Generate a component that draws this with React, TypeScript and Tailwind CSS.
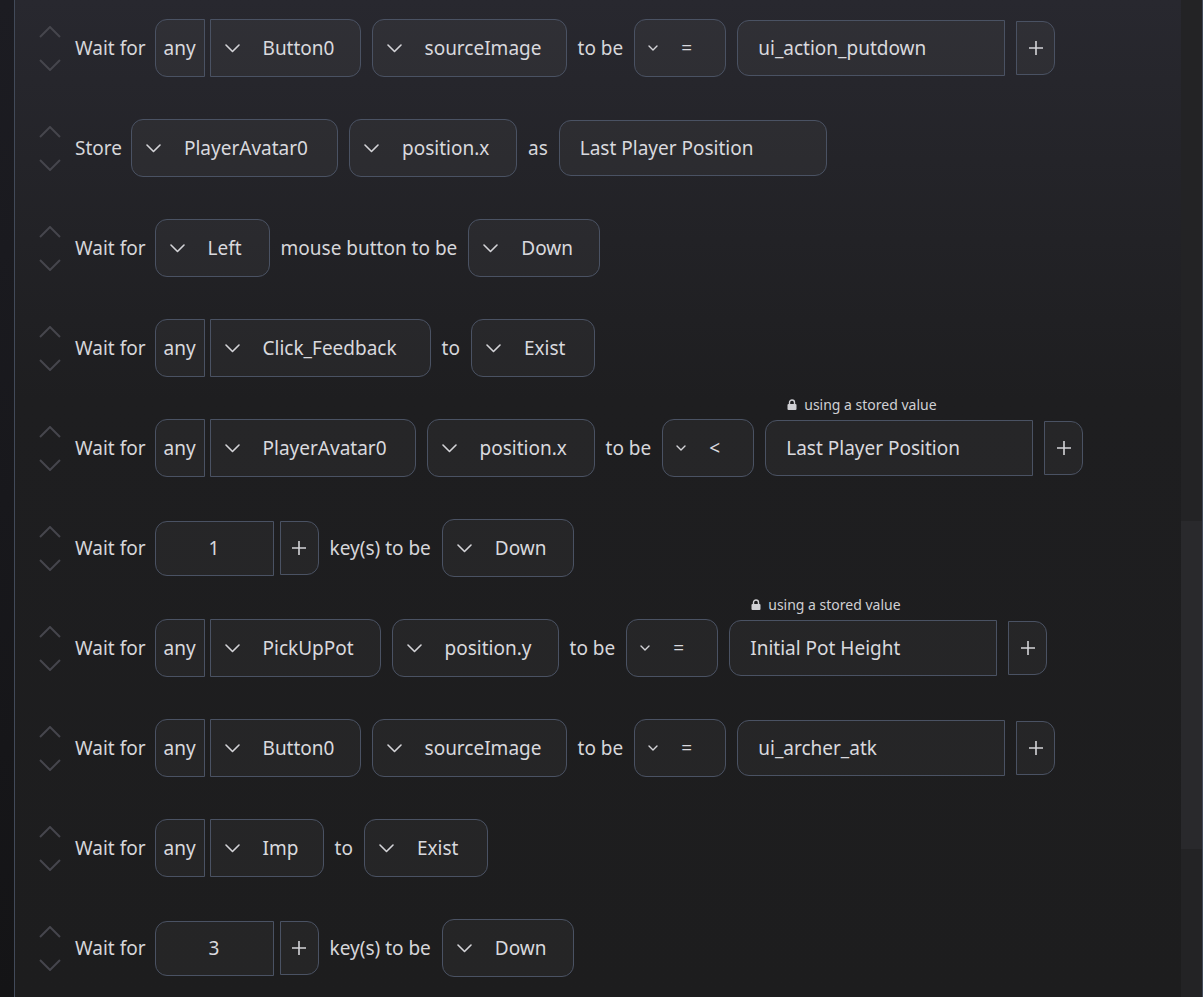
import React from "react";

const font = { fontFamily: '"Noto Sans", "Open Sans", sans-serif' };

const Chev = () => (
  <svg width="15" height="9" viewBox="0 0 15 9" fill="none" className="shrink-0">
    <polyline points="1,1 7.5,7.5 14,1" stroke="#d4d4d8" strokeWidth="1.6" strokeLinecap="round" strokeLinejoin="round" />
  </svg>
);

const SmallChev = () => (
  <svg width="10" height="6" viewBox="0 0 10 6" fill="none" className="shrink-0">
    <polyline points="1,1 5,5 9,1" stroke="#d4d4d8" strokeWidth="1.4" strokeLinecap="round" strokeLinejoin="round" />
  </svg>
);

const Plus = () => (
  <div className="flex h-[54px] w-[39px] shrink-0 items-center justify-center rounded-r-[12px] border border-[#4a5263] bg-white/[0.035]">
    <svg width="18" height="18" viewBox="0 0 18 18" fill="none">
      <path d="M9 2v14M2 9h14" stroke="#d4d4d8" strokeWidth="1.6" />
    </svg>
  </div>
);

const Mover = () => (
  <div className="mr-[4px] flex w-[20px] shrink-0 flex-col items-center gap-[21px]">
    <svg width="22" height="12" viewBox="0 0 22 12" fill="none">
      <polyline points="1,11 11,1 21,11" stroke="#46464d" strokeWidth="2" />
    </svg>
    <svg width="22" height="12" viewBox="0 0 22 12" fill="none">
      <polyline points="1,1 11,11 21,1" stroke="#46464d" strokeWidth="2" />
    </svg>
  </div>
);

const Text = ({ children, lead }: { children: React.ReactNode; lead?: boolean }) => (
  <span className={`shrink-0 whitespace-nowrap text-[19px] text-[#d6d6da] ${lead ? "-mr-[2px]" : ""}`}>{children}</span>
);

const Select = ({ label, w, attached }: { label: string; w: number; attached?: boolean }) => (
  <div
    style={{ width: w }}
    className={`flex h-[58px] shrink-0 items-center gap-[23px] border border-[#4a5263] bg-white/[0.035] pl-[14px] text-[19px] text-[#d9d9de] ${
      attached ? "rounded-r-[12px]" : "rounded-[12px]"
    }`}
  >
    <Chev />
    <span className="whitespace-nowrap">{label}</span>
  </div>
);

const Any = ({ label, w }: { label: string; w: number }) => (
  <div className="flex shrink-0 items-center gap-[5px]">
    <div className="flex h-[58px] w-[50px] items-center justify-center rounded-l-[12px] border border-[#4a5263] bg-white/[0.035] text-[19px] text-[#d9d9de]">
      any
    </div>
    <Select label={label} w={w} attached />
  </div>
);

const Op = ({ sym }: { sym: string }) => (
  <div className="flex h-[58px] w-[92px] shrink-0 items-center rounded-[12px] border border-[#4a5263] bg-white/[0.035] pl-[13px] text-[19px] text-[#d9d9de]">
    <SmallChev />
    <span className="ml-[23px]">{sym}</span>
  </div>
);

const Value = ({ value, stored, plus = true }: { value: string; stored?: boolean; plus?: boolean }) => (
  <div className="flex shrink-0 items-center gap-[11px]">
    <div className="relative">
      {stored && (
        <div className="absolute -top-[26px] left-[22px] flex items-center gap-[7px] whitespace-nowrap text-[14px] text-[#d0d0d4]">
          <svg width="10" height="11" viewBox="0 0 10 11">
            <path d="M2.5 5V3.5a2.5 2.5 0 0 1 5 0V5" stroke="#d0d0d4" strokeWidth="1.4" fill="none" />
            <rect x="0.5" y="5" width="9" height="6" rx="1" fill="#d0d0d4" />
          </svg>
          using a stored value
        </div>
      )}
      <div
        className={`flex h-[56px] w-[268px] items-center border border-[#4a5263] bg-white/[0.035] pl-[20px] text-[19px] text-[#d9d9de] ${
          plus ? "rounded-l-[12px]" : "rounded-[12px]"
        }`}
      >
        {value}
      </div>
    </div>
    {plus && <Plus />}
  </div>
);

const Num = ({ n }: { n: string }) => (
  <div className="flex shrink-0 items-center gap-[6px]">
    <div className="flex h-[55px] w-[119px] items-center justify-center rounded-l-[12px] border border-[#4a5263] bg-white/[0.035] text-[19px] text-[#d9d9de]">
      {n}
    </div>
    <Plus />
  </div>
);

const Row = ({ children }: { children: React.ReactNode }) => (
  <div className="flex h-[100px] items-center gap-[11px] pl-[25px]">
    <Mover />
    {children}
  </div>
);

export default function App() {
  return (
    <div style={font} className="flex h-[997px] w-[1203px] overflow-hidden bg-[linear-gradient(to_bottom,#1c1c22,#141416)]">
      <div className="w-[14px] shrink-0" />
      <div className="flex flex-1 border-x border-[#424a59] bg-[linear-gradient(to_bottom,#28282f_0px,#1e1e20_400px,#1d1d1e_997px)]">
        <div className="-mt-[2px] flex-1">
          <Row>
            <Text lead>Wait for</Text>
            <Any label="Button0" w={151} />
            <Select label="sourceImage" w={195} />
            <Text>to be</Text>
            <Op sym="=" />
            <Value value="ui_action_putdown" />
          </Row>
          <Row>
            <Text lead>Store</Text>
            <Select label="PlayerAvatar0" w={207} />
            <Select label="position.x" w={168} />
            <Text>as</Text>
            <Value value="Last Player Position" plus={false} />
          </Row>
          <Row>
            <Text lead>Wait for</Text>
            <Select label="Left" w={115} />
            <Text>mouse button to be</Text>
            <Select label="Down" w={132} />
          </Row>
          <Row>
            <Text lead>Wait for</Text>
            <Any label="Click_Feedback" w={221} />
            <Text>to</Text>
            <Select label="Exist" w={124} />
          </Row>
          <Row>
            <Text lead>Wait for</Text>
            <Any label="PlayerAvatar0" w={206} />
            <Select label="position.x" w={168} />
            <Text>to be</Text>
            <Op sym="<" />
            <Value value="Last Player Position" stored />
          </Row>
          <Row>
            <Text lead>Wait for</Text>
            <Num n="1" />
            <Text>key(s) to be</Text>
            <Select label="Down" w={132} />
          </Row>
          <Row>
            <Text lead>Wait for</Text>
            <Any label="PickUpPot" w={171} />
            <Select label="position.y" w={167} />
            <Text>to be</Text>
            <Op sym="=" />
            <Value value="Initial Pot Height" stored />
          </Row>
          <Row>
            <Text lead>Wait for</Text>
            <Any label="Button0" w={151} />
            <Select label="sourceImage" w={195} />
            <Text>to be</Text>
            <Op sym="=" />
            <Value value="ui_archer_atk" />
          </Row>
          <Row>
            <Text lead>Wait for</Text>
            <Any label="Imp" w={114} />
            <Text>to</Text>
            <Select label="Exist" w={124} />
          </Row>
          <Row>
            <Text lead>Wait for</Text>
            <Num n="3" />
            <Text>key(s) to be</Text>
            <Select label="Down" w={132} />
          </Row>
        </div>
        <div className="flex w-[21px] shrink-0 flex-col bg-[#232325]">
          <div className="h-[521px]" />
          <div className="h-[328px] bg-[#29292c]" />
        </div>
      </div>
    </div>
  );
}
